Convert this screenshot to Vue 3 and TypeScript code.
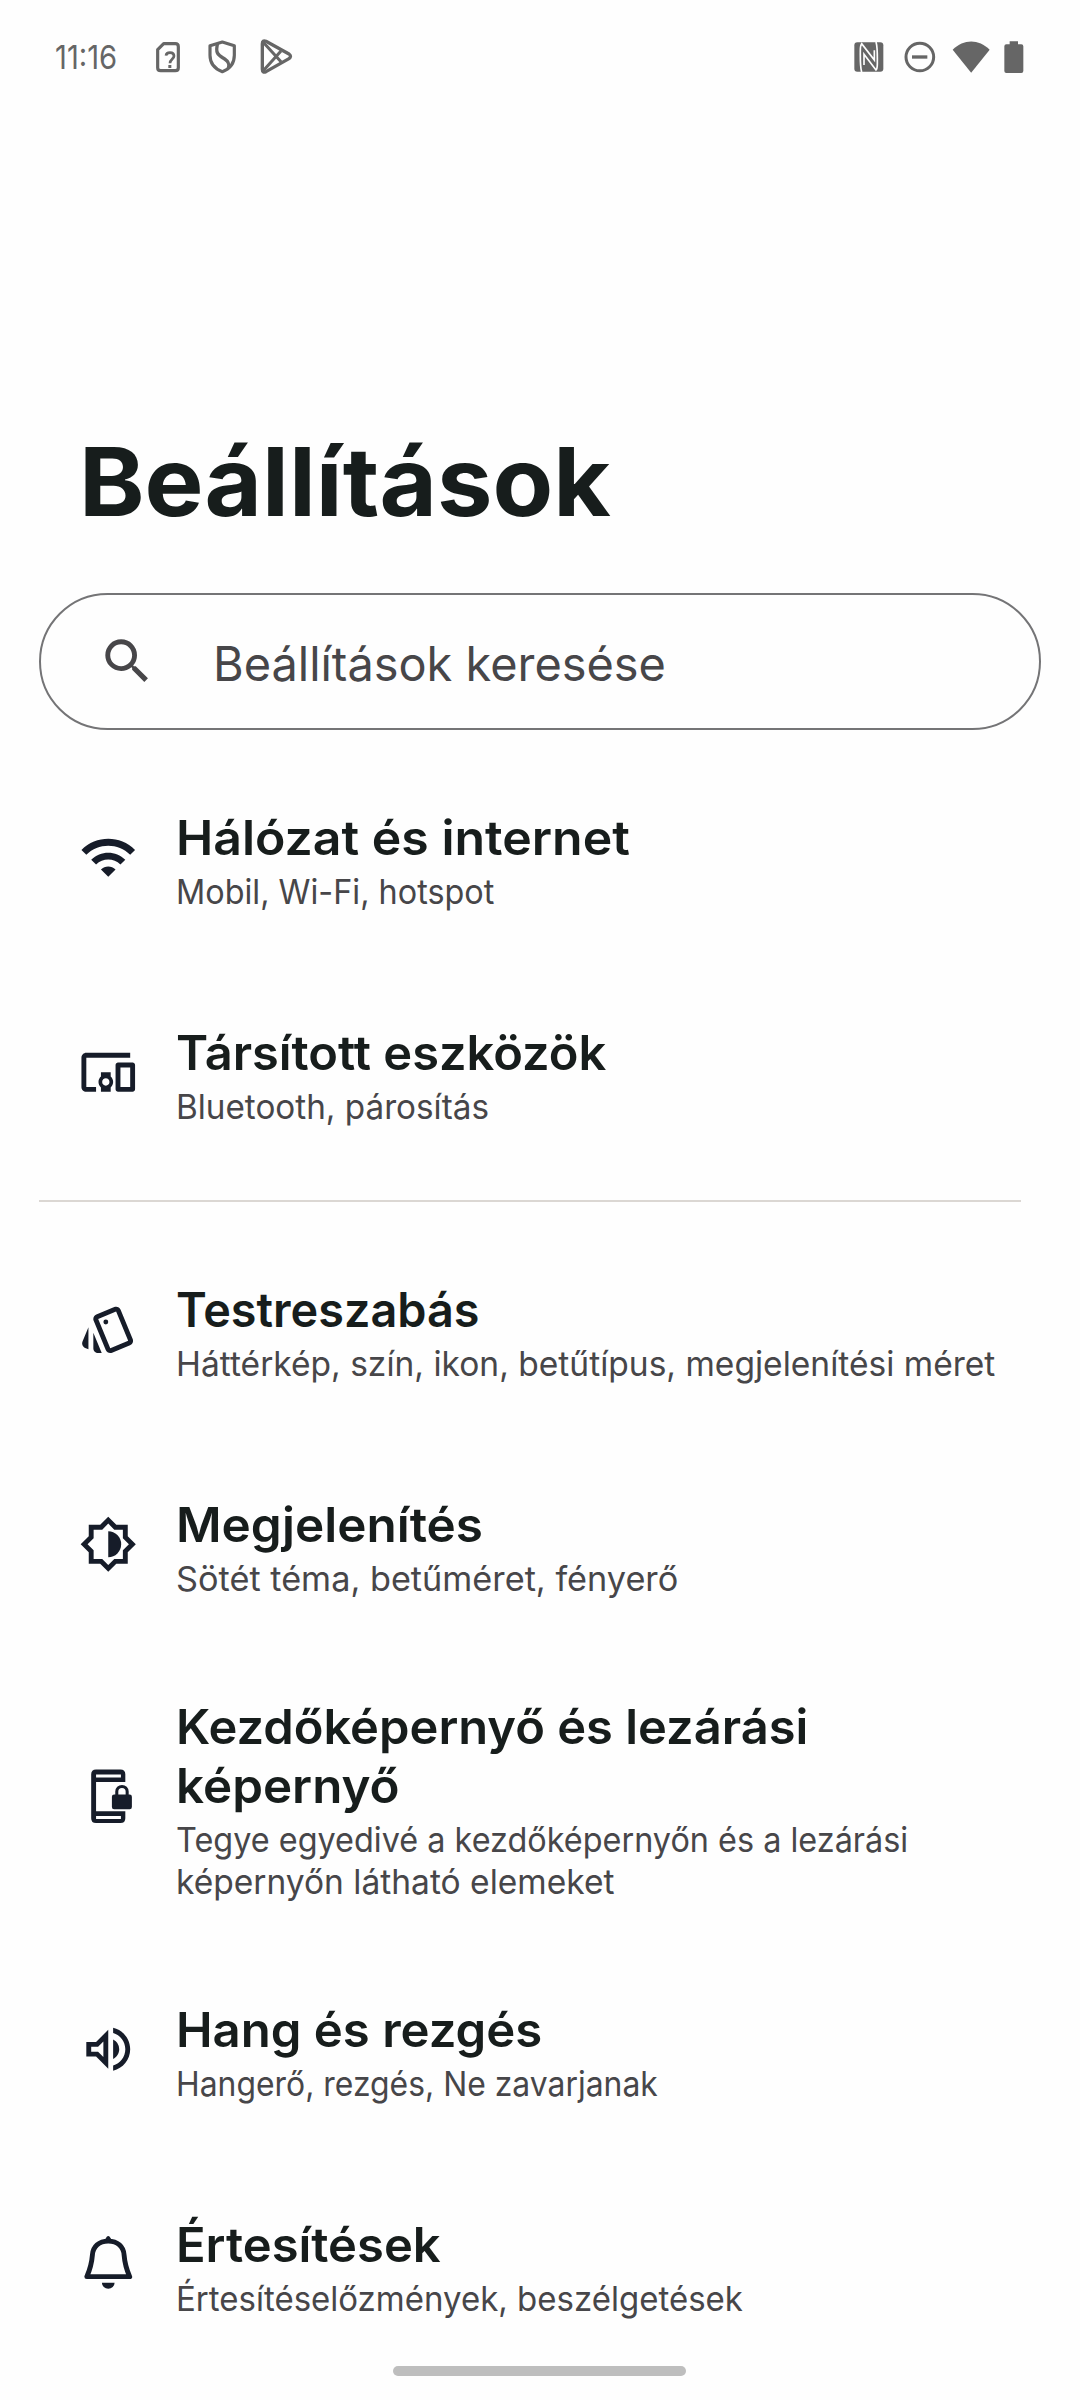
<script setup lang="ts">
interface Line { text: string; width: number }
interface Item { icon: string; title: Line[]; summary: Line[] }

const connections: Item[] = [
  { icon: 'wifi', title: [{ text: 'Hálózat és internet', width: 454 }], summary: [{ text: 'Mobil, Wi-Fi, hotspot', width: 318 }] },
  { icon: 'devices', title: [{ text: 'Társított eszközök', width: 430 }], summary: [{ text: 'Bluetooth, párosítás', width: 313 }] },
]
const personal: Item[] = [
  { icon: 'style', title: [{ text: 'Testreszabás', width: 303 }], summary: [{ text: 'Háttérkép, szín, ikon, betűtípus, megjelenítési méret', width: 819 }] },
  { icon: 'brightness', title: [{ text: 'Megjelenítés', width: 307 }], summary: [{ text: 'Sötét téma, betűméret, fényerő', width: 502 }] },
  {
    icon: 'lock',
    title: [{ text: 'Kezdőképernyő és lezárási', width: 632 }, { text: 'képernyő', width: 224 }],
    summary: [{ text: 'Tegye egyedivé a kezdőképernyőn és a lezárási', width: 732 }, { text: 'képernyőn látható elemeket', width: 438 }],
  },
  { icon: 'volume', title: [{ text: 'Hang és rezgés', width: 366 }], summary: [{ text: 'Hangerő, rezgés, Ne zavarjanak', width: 482 }] },
  { icon: 'bell', title: [{ text: 'Értesítések', width: 265 }], summary: [{ text: 'Értesítéselőzmények, beszélgetések', width: 567 }] },
]
const groups = [connections, personal]

// Stretches a line horizontally to its design width.
const vFit = {
  mounted(el: HTMLElement, binding: { value: number }) {
    el.style.transform = `scaleX(${binding.value / el.offsetWidth})`
  },
}
</script>

<template>
  <div class="screen">
    <header class="status">
      <span class="time"><span v-fit="62" class="line">11:16</span></span>
      <svg class="sim" width="26" height="32" viewBox="345 63 78 96">
        <path d="M371 71H406Q415 71 415 80V143Q415 152 406 152H362Q353 152 353 143V89Z" fill="none" stroke="#666" stroke-width="9.500" stroke-linejoin="round" />
        <path d="M378 107Q379 98 390 98Q402 98 402 108C402 117 390 117 390 130" fill="none" stroke="#666" stroke-width="8" />
        <rect x="385" y="135" width="9" height="9" fill="#666" />
      </svg>
      <svg class="shield" width="30" height="36" viewBox="501 59 90 108">
        <path d="M547 68L583 79V108C583 133 569 149 547 157C525 149 510 133 510 108V79Z" fill="none" stroke="#666" stroke-width="9.500" stroke-linejoin="round" />
        <path d="M533 72C524 104 537 108 554 119C568 128 568 137 565 148" fill="none" stroke="#666" stroke-width="10" />
      </svg>
      <svg class="play" width="34" height="38" viewBox="657 58 102 114">
        <path d="M667 75Q667 63 678 68L747 106Q756 113 747 120L678 159Q667 164 667 152Z" fill="none" stroke="#666" stroke-width="10" stroke-linejoin="round" />
        <path d="M669 70L723 129M669 157L723 97" fill="none" stroke="#666" stroke-width="9" />
      </svg>
      <span class="spacer"></span>
      <svg class="nfc" width="30" height="30" viewBox="74 67 90 90">
        <rect x="75" y="68" width="87" height="88" rx="9" fill="#666" />
        <path d="M97 157C92 142 93 105 93 92C93 80 94 76 97 72L135 121V92" fill="none" stroke="#fefefe" stroke-width="5" />
        <path d="M140 67C145 82 144 120 144 132C144 144 143 148 140 151L104 104V136" fill="none" stroke="#fefefe" stroke-width="5" />
      </svg>
      <svg class="dnd" width="32" height="32" viewBox="224 64 96 96">
        <circle cx="271.500" cy="112" r="41.500" fill="none" stroke="#666" stroke-width="9" />
        <rect x="248" y="107" width="46" height="10" fill="#666" />
      </svg>
      <svg class="net" width="38" height="32" viewBox="367 62 114 96">
        <path d="M369 88C402 55 447 55 480 88L424.500 157Z" fill="#666" />
      </svg>
      <svg class="battery" width="20" height="32" viewBox="524 62 60 96">
        <path d="M541 63H566V72H576Q582 72 582 78V152Q582 158 576 158H531Q525 158 525 152V78Q525 72 531 72H541Z" fill="#666" />
      </svg>
    </header>

    <h1 class="heading"><span v-fit="532" class="line">Beállítások</span></h1>

    <div class="search">
      <svg class="glass" viewBox="0 0 24 24"><path d="M15.500 14h-.79l-.28-.27A6.470 6.470 0 0 0 16 9.500 6.500 6.500 0 1 0 9.500 16c1.610 0 3.090-.59 4.230-1.570l.27.28v.79l5 4.990L20.490 19l-4.990-5zm-6 0C7.010 14 5 11.990 5 9.500S7.010 5 9.500 5 14 7.010 14 9.500 11.990 14 9.500 14z" /></svg>
      <span class="hint"><span v-fit="453" class="line">Beállítások keresése</span></span>
    </div>

    <main class="list">
      <section v-for="(group, g) in groups" :key="g" class="group">
        <div v-for="item in group" :key="item.icon" class="row">
          <svg class="icon" :class="item.icon" viewBox="0 0 24 24">
            <path v-if="item.icon === 'wifi'" d="M1 9l2 2c4.970-4.970 13.030-4.970 18 0l2-2C16.930 2.930 7.080 2.930 1 9zm8 8l3 3 3-3c-1.650-1.660-4.340-1.660-6 0zm-4-4l2 2c2.760-2.760 7.240-2.760 10 0l2-2C15.140 9.140 8.870 9.140 5 13z" />
            <path v-else-if="item.icon === 'devices'" d="M3 6h18V4H3c-1.100 0-2 .9-2 2v12c0 1.100.9 2 2 2h4v-2H3V6zm10 6H9v1.780c-.61.55-1 1.330-1 2.220s.39 1.670 1 2.220V20h4v-1.780c.61-.55 1-1.340 1-2.220s-.39-1.670-1-2.220V12zm-2 5.500c-.83 0-1.500-.67-1.500-1.500s.67-1.500 1.500-1.500 1.500.67 1.500 1.500-.67 1.500-1.500 1.500zM22 8h-6c-.5 0-1 .5-1 1v10c0 .5.5 1 1 1h6c.5 0 1-.5 1-1V9c0-.5-.5-1-1-1zm-1 10h-4v-8h4v8z" />
            <template v-else-if="item.icon === 'style'">
              <path d="M2.530 19.650l1.340.56v-9.030l-2.430 5.860c-.41 1.020.08 2.190 1.090 2.610zm19.500-3.700L17.070 3.980c-.31-.75-1.040-1.210-1.810-1.230-.26 0-.53.04-.79.15L7.100 5.950c-.75.31-1.210 1.030-1.230 1.800-.01.27.04.54.15.8l4.960 11.970c.31.76 1.050 1.220 1.830 1.230.26 0 .52-.05.77-.15l7.360-3.050c1.020-.42 1.510-1.590 1.090-2.600zm-9.200 3.800L7.870 7.790l7.350-3.040h.01l4.950 11.950-7.350 3.050zM5.880 19.750c0 1.100.9 2 2 2h1.450l-3.450-8.340v6.340z" />
              <circle cx="11" cy="9" r="1" />
            </template>
            <template v-else-if="item.icon === 'brightness'">
              <path fill-rule="evenodd" d="M20 15.310L23.310 12 20 8.690V4h-4.690L12 .69 8.690 4H4v4.690L.69 12 4 15.310V20h4.690L12 23.310 15.310 20H20zM18 14.480V18h-3.520L12 20.480 9.520 18H6v-3.520L3.520 12 6 9.520V6h3.520L12 3.520 14.480 6H18v3.520L20.480 12z" />
              <path d="M12 6.700a5.300 5.300 0 0 1 0 10.600z" />
            </template>
            <template v-else-if="item.icon === 'lock'">
              <path fill-rule="evenodd" d="M7 1H17Q19 1 19 3V6.200H7V18.200H19V21Q19 23 17 23H7Q5 23 5 21V3Q5 1 7 1ZM7 3.100V4.300H17.200V3.100ZM7 20.100V21.300H17.200V20.100Z" />
              <rect x="13.500" y="11.300" width="8.200" height="6" rx=".9" />
              <path d="M15.500 12V10.100a2.130 2.130 0 0 1 4.260 0V12" fill="none" stroke="#161c29" stroke-width="1.250" />
            </template>
            <path v-else-if="item.icon === 'volume'" d="M3 9v6h4l5 5V4L7 9H3zm7-.17v6.340L7.830 13H5v-2h2.830L10 8.830zM16.500 12A4.500 4.500 0 0 0 14 7.970v8.050c1.480-.73 2.500-2.250 2.500-4.020zM14 3.230v2.060c2.890.86 5 3.540 5 6.710s-2.110 5.850-5 6.710v2.060c4.010-.91 7-4.490 7-8.770s-2.990-7.860-7-8.770z" />
            <template v-else>
              <path d="M3.200 17.100C4.800 13.500 5.200 12 5.500 8.200C5.700 4.800 8.200 2.500 12 2.500S18.300 4.800 18.500 8.200C18.800 12 19.200 13.500 20.800 17.100Z" fill="none" stroke="#161c29" stroke-width="2" stroke-linejoin="round" />
              <path d="M10.500 2.200L11.400.7Q12 .1 12.600.7L13.500 2.200ZM9.400 19.600H14.600A2.600 2.500 0 0 1 9.400 19.600Z" />
            </template>
          </svg>
          <div class="body">
            <div class="title"><div v-for="l in item.title" :key="l.text"><span v-fit="l.width" class="line">{{ l.text }}</span></div></div>
            <div class="summary"><div v-for="l in item.summary" :key="l.text"><span v-fit="l.width" class="line">{{ l.text }}</span></div></div>
          </div>
        </div>
      </section>
    </main>

    <div class="pill"></div>
  </div>
</template>

<style>
body { margin: 0; background: #fefefe; }
</style>

<style scoped>
.screen { position: relative; width: 1080px; height: 2400px; overflow: hidden; box-sizing: border-box; background: #fefefe; font-family: Inter, "Open Sans", sans-serif; color: #171d1c; }
.line { display: inline-block; white-space: nowrap; transform-origin: left center; }
.status { display: flex; align-items: center; height: 114px; padding: 0 56px 0 55px; box-sizing: border-box; }
.status svg { flex: none; }
.time { width: 100px; font-size: 33px; line-height: 40px; color: #666; }
.shield { margin-left: 26px; }
.play { margin-left: 22px; }
.spacer { flex: 1; }
.dnd { margin-left: 20px; }
.net { margin-left: 16px; }
.battery { margin-left: 14px; }
.heading { margin: 310px 0 0 79px; font-size: 95px; line-height: 116px; font-weight: 700; }
.search { display: flex; align-items: center; box-sizing: border-box; width: 1002px; height: 137px; margin: 53px 0 0 39px; padding-left: 57px; border: 2px solid #747476; border-radius: 69px; color: #474649; }
.glass { width: 58.5px; height: 58.5px; fill: #474649; }
.hint { margin-left: 56px; padding-top: 4px; font-size: 47.500px; line-height: 58px; }
.list { padding-top: 21px; }
.group + .group::before { content: ''; display: block; width: 982px; height: 2px; margin: 19px 0 21px 39px; background: #dbd7d3; }
.row { display: flex; align-items: center; box-sizing: border-box; min-height: 215px; padding: 44px 0 44px 78.5px; }
.icon { flex: none; width: 58.5px; height: 58.5px; margin-top: -2px; fill: #161c29; }
.icon.lock { margin-top: -4px; }
.body { margin-left: 39px; }
.title { font-size: 48px; line-height: 59px; font-weight: 600; }
.summary { margin: 4px 0 -4px; font-size: 34px; line-height: 42px; color: #474649; }
.pill { position: absolute; left: 393px; bottom: 24px; width: 293px; height: 10px; border-radius: 5px; background: #bebebe; }
</style>
